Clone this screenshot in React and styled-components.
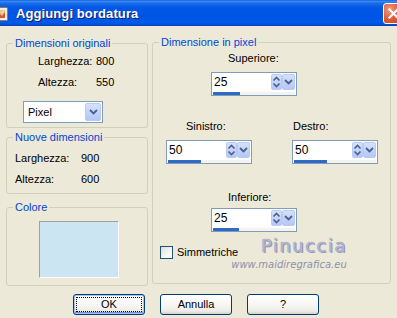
import React from 'react';
import styled, { createGlobalStyle } from 'styled-components';

const Global = createGlobalStyle`
  html, body { margin: 0; padding: 0; background: #ECE9D8; }
  body { font-family: "Liberation Sans", Arial, sans-serif; font-size: 11px; color: #000; }
  * { box-sizing: border-box; }
`;

const Window = styled.div`
  position: relative;
  width: 397px;
  height: 318px;
  overflow: hidden;
  background: #ECE9D8;
  display: flex;
  flex-direction: column;
`;

const TitleBar = styled.div`
  height: 26px;
  flex: none;
  display: flex;
  align-items: center;
  background: linear-gradient(to bottom, #0A5BD6 0%, #3D8DF6 5%, #1E6DEA 11%, #0058E6 30%, #0054E3 62%, #005BEB 86%, #0050D6 94%, #0A3FB0 100%);
`;

const AppIcon = styled.svg`
  flex: none;
  margin-left: -8px;
  margin-top: 1px;
`;

const Title = styled.div`
  margin-left: 8px;
  color: #fff;
  font-family: "Liberation Sans", Arial, sans-serif;
  font-weight: bold;
  font-size: 13px;
  letter-spacing: 0.1px;
  text-shadow: 1px 1px 0 #0A1D7A;
  padding-top: 1px;
`;

const CloseBtn = styled.div`
  margin-left: auto;
  margin-right: -7px;
  width: 21px;
  height: 21px;
  flex: none;
  border: 1px solid #fff;
  border-radius: 3px;
  background: radial-gradient(circle at 30% 30%, #F29B7E 0%, #E2603D 45%, #C7421E 100%);
  display: flex;
  align-items: center;
  justify-content: center;
`;

const Content = styled.div`
  flex: 1;
  display: flex;
  flex-direction: column;
  padding: 10px 6px 0 6px;
`;

const Columns = styled.div`
  display: flex;
  gap: 4px;
  height: 250px;
`;

const LeftCol = styled.div`
  width: 142px;
  display: flex;
  flex-direction: column;
  padding-top: 1px;
`;

const Group = styled.fieldset`
  margin: ${p => p.$mt || 0}px 0 0 0;
  padding: 0;
  border: 1px solid #D0D0BF;
  border-radius: 3px;
  min-width: 0;
  width: ${p => p.$w}px;
  height: ${p => p.$h}px;
  position: relative;
`;

const Legend = styled.legend`
  color: #0046D5;
  padding: 0 2px;
  margin-left: 6px;
  line-height: 13px;
  font-size: 11px;
`;

const InfoGrid = styled.div`
  display: grid;
  grid-template-columns: ${p => p.$col}px auto;
  row-gap: 8px;
  line-height: 13px;
  padding: ${p => p.$pt}px 0 0 ${p => p.$pl}px;
`;

const Select = styled.div`
  margin: 12px 0 0 16px;
  width: 80px;
  height: 22px;
  border: 1px solid #7F9DB9;
  background: #fff;
  display: flex;
  align-items: center;
  padding: 1px;
`;

const SelectText = styled.span`
  flex: 1;
  padding-left: 3px;
  line-height: 13px;
`;

const BlueBtn = styled.div`
  width: ${p => p.$w}px;
  height: 100%;
  flex: none;
  border-radius: 2px;
  background: linear-gradient(to bottom, #D6E2FC 0%, #C3D3FD 50%, #B4C7F7 100%);
  border: 1px solid #B9CBF3;
  display: flex;
  flex-direction: column;
  align-items: center;
  justify-content: center;
  gap: 1px;
`;

const Swatch = styled.div`
  margin: 7px 0 0 32px;
  width: 80px;
  height: 57px;
  background: #CBE5F2;
  border-top: 1px solid #A0A0A0;
  border-left: 1px solid #A0A0A0;
  border-right: 1px solid #fff;
  border-bottom: 1px solid #fff;
`;

const RightBody = styled.div`
  display: flex;
  flex-direction: column;
`;

const FieldRow = styled.div`
  display: flex;
  margin-top: ${p => p.$mt}px;
`;

const Field = styled.div`
  display: flex;
  flex-direction: column;
  margin-left: ${p => p.$ml}px;
  width: 86px;
`;

const FieldLabel = styled.div`
  line-height: 13px;
  padding-left: ${p => p.$indent}px;
  margin-bottom: ${p => p.$gap}px;
`;

const SpinBox = styled.div`
  width: 86px;
  height: 24px;
  border: 1px solid #7F9DB9;
  background: #fff;
  display: flex;
  flex-direction: column;
  padding: 1px 1px 0 1px;
`;

const SpinTop = styled.div`
  height: 16px;
  display: flex;
  align-items: center;
`;

const SpinValue = styled.span`
  flex: 1;
  padding-left: 1px;
  line-height: 13px;
  font-size: 12px;
`;

const Track = styled.div`
  margin-top: 2px;
  height: 3px;
  background: #F4F3EE;
  display: flex;
`;

const TrackFill = styled.div`
  height: 100%;
  background: #316AC5;
`;

const CheckRow = styled.div`
  display: flex;
  align-items: center;
  gap: 4px;
  margin: 14px 0 0 7px;
  line-height: 13px;
`;

const CheckBox = styled.div`
  width: 13px;
  height: 13px;
  border: 1px solid #1C5180;
  background: linear-gradient(135deg, #DCDCD7 0%, #F6F6F3 60%, #fff 100%);
`;

const ButtonRow = styled.div`
  display: flex;
  gap: 15px;
  margin-top: 8px;
  padding-left: 67px;
`;

const Button = styled.div`
  width: 72px;
  height: 21px;
  border: 1px solid #003C74;
  border-radius: 3px;
  background: linear-gradient(to bottom, #FFFFFF 0%, #F4F4F0 60%, #ECEBE6 85%, #D6D0C5 100%);
  display: flex;
  align-items: center;
  justify-content: center;
  line-height: 13px;
  font-size: 11px;
  box-shadow: ${p => p.$default ? 'inset 0 0 0 1px #A9C3F2, inset 0 -1px 0 1px #6A8FE0' : 'none'};
  outline: ${p => p.$default ? '1px dotted #000' : 'none'};
  outline-offset: -4px;
`;

const Watermark = styled.div`
  position: absolute;
  left: 228px;
  top: 236px;
  width: 122px;
  display: flex;
  flex-direction: column;
  align-items: center;
  pointer-events: none;
`;

const WmName = styled.div`
  font-family: "DejaVu Sans", sans-serif;
  font-size: 18px;
  letter-spacing: 1.5px;
  color: #B4B4D2;
  text-shadow: 0 0 1px #8A8AAE, 1px 1px 0 #9696B8;
  line-height: 20px;
  margin-left: 30px;
`;

const WmUrl = styled.div`
  font-family: "DejaVu Sans", sans-serif;
  font-style: italic;
  font-size: 10px;
  color: #9090AA;
  line-height: 13px;
  margin-top: 2px;
`;

const UpDownIcon = () => (
  <svg width="9" height="12" viewBox="0 0 9 12">
    <path d="M1.5 4.5 L4.5 1.5 L7.5 4.5" fill="none" stroke="#4D6185" strokeWidth="1.6" />
    <path d="M1.5 7.5 L4.5 10.5 L7.5 7.5" fill="none" stroke="#4D6185" strokeWidth="1.6" />
  </svg>
);

const ChevronDown = ({ size = 9 }) => (
  <svg width={size} height="6" viewBox="0 0 9 6">
    <path d="M1 1 L4.5 4.5 L8 1" fill="none" stroke="#4D6185" strokeWidth="1.8" />
  </svg>
);

const Spin = ({ value, fill }) => (
  <SpinBox>
    <SpinTop>
      <SpinValue>{value}</SpinValue>
      <BlueBtn $w={11}><UpDownIcon /></BlueBtn>
      <BlueBtn $w={13}><ChevronDown /></BlueBtn>
    </SpinTop>
    <Track><TrackFill style={{ width: fill }} /></Track>
  </SpinBox>
);

export default function App() {
  return (
    <Window>
      <Global />
      <TitleBar>
        <AppIcon width="16" height="16" viewBox="0 0 16 16">
          <rect x="0.5" y="1.5" width="15" height="13" rx="1" fill="#F4EEDC" stroke="#8C7A5A" />
          <rect x="3" y="4" width="10" height="8" fill="#E9C38A" />
          <path d="M3 12 L7 7 L10 10 L13 6 L13 12 Z" fill="#D4553A" />
          <circle cx="10.5" cy="6" r="1.2" fill="#F7E27A" />
        </AppIcon>
        <Title>Aggiungi bordatura</Title>
        <CloseBtn>
          <svg width="11" height="11" viewBox="0 0 11 11">
            <path d="M1.5 1.5 L9.5 9.5 M9.5 1.5 L1.5 9.5" stroke="#fff" strokeWidth="2.2" strokeLinecap="square" />
          </svg>
        </CloseBtn>
      </TitleBar>
      <Content>
        <Columns>
          <LeftCol>
            <Group $w={142} $h={91}>
              <Legend>Dimensioni originali</Legend>
              <InfoGrid $col={58} $pt={5} $pl={31}>
                <span>Larghezza:</span><span>800</span>
                <span>Altezza:</span><span>550</span>
              </InfoGrid>
              <Select>
                <SelectText>Pixel</SelectText>
                <BlueBtn $w={16}><ChevronDown /></BlueBtn>
              </Select>
            </Group>
            <Group $w={142} $h={63} $mt={3}>
              <Legend>Nuove dimensioni</Legend>
              <InfoGrid $col={66} $pt={8} $pl={8}>
                <span>Larghezza:</span><span>900</span>
                <span>Altezza:</span><span>600</span>
              </InfoGrid>
            </Group>
            <Group $w={142} $h={85} $mt={7}>
              <Legend>Colore</Legend>
              <Swatch />
            </Group>
          </LeftCol>
          <Group $w={239} $h={248}>
            <Legend>Dimensione in pixel</Legend>
            <RightBody>
              <FieldRow $mt={3}>
                <Field $ml={58}>
                  <FieldLabel $indent={17} $gap={7}>Superiore:</FieldLabel>
                  <Spin value="25" fill={27} />
                </Field>
              </FieldRow>
              <FieldRow $mt={24}>
                <Field $ml={13}>
                  <FieldLabel $indent={20} $gap={7}>Sinistro:</FieldLabel>
                  <Spin value="50" fill={33} />
                </Field>
                <Field $ml={40}>
                  <FieldLabel $indent={1} $gap={7}>Destro:</FieldLabel>
                  <Spin value="50" fill={33} />
                </Field>
              </FieldRow>
              <FieldRow $mt={27}>
                <Field $ml={58}>
                  <FieldLabel $indent={17} $gap={4}>Inferiore:</FieldLabel>
                  <Spin value="25" fill={26} />
                </Field>
              </FieldRow>
              <CheckRow>
                <CheckBox />
                <span>Simmetriche</span>
              </CheckRow>
            </RightBody>
          </Group>
        </Columns>
        <ButtonRow>
          <Button $default>OK</Button>
          <Button>Annulla</Button>
          <Button>?</Button>
        </ButtonRow>
      </Content>
      <Watermark>
        <WmName>Pinuccia</WmName>
        <WmUrl>www.maidiregrafica.eu</WmUrl>
      </Watermark>
    </Window>
  );
}
